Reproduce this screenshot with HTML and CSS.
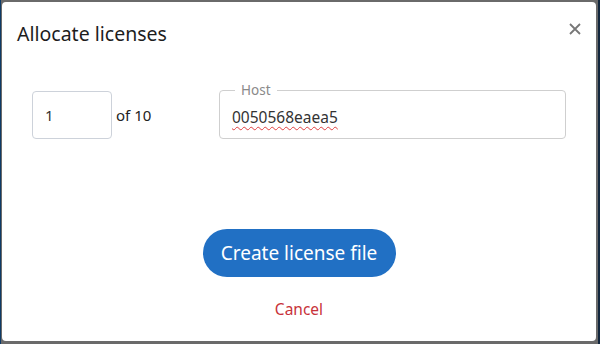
FILE: index.html
```html
<!DOCTYPE html>
<html lang="en">
<head>
    <meta charset="UTF-8">
    <meta name="viewport" content="width=device-width, initial-scale=1.0">
    <title>Allocate licenses</title>
    <link rel="stylesheet" href="styles.css">
</head>
<body>
    <div class="backdrop">
        <div class="dialog">
            <div class="dialog-header">
                <h2>Allocate licenses</h2>
                <button class="close-btn" aria-label="Close">
                    <svg width="12" height="12" viewBox="0 0 12 12">
                        <path d="M1 1 L11 11 M11 1 L1 11" stroke="#777" stroke-width="1.8" fill="none"/>
                    </svg>
                </button>
            </div>

            <div class="dialog-body">
                <div class="count-group">
                    <input type="text" class="count-input" value="1">
                    <span class="count-total">of 10</span>
                </div>
                <fieldset class="host-field">
                    <legend>Host</legend>
                    <span class="host-value">0050568eaea5</span>
                </fieldset>
            </div>

            <div class="dialog-actions">
                <button class="primary-btn">Create license file</button>
                <a href="#" class="cancel-link">Cancel</a>
            </div>
        </div>
    </div>
</body>
</html>
```

FILE: styles.css
```css
body {
    margin: 0;
    padding: 0;
    background-color: #6a6a6a;
    font-family: 'Noto Sans', 'Open Sans', sans-serif;
    color: #222;
}

.backdrop {
    padding: 2px 2px 3px 1px;
    height: 344px;
    box-sizing: border-box;
    border-left: 1px solid #0d3a66;
    border-right: 2px solid #12263d;
}

.dialog {
    background-color: white;
    border-radius: 4px;
    height: 339px;
    display: flex;
    flex-direction: column;
}

.dialog-header {
    display: flex;
    justify-content: space-between;
    align-items: center;
    padding: 18px 14px 0 15px;
}

.dialog-header h2 {
    margin: 0;
    font-size: 19.5px;
    font-weight: normal;
    color: #1d1d1d;
}

.close-btn {
    background: none;
    border: none;
    padding: 0;
    width: 14px;
    height: 14px;
    cursor: pointer;
    margin-top: -7px;
}

.dialog-body {
    display: flex;
    align-items: center;
    padding: 0 30px 0 30px;
    margin-top: 43px;
}

.count-group {
    display: flex;
    align-items: center;
    gap: 4px;
}

.count-input {
    width: 80px;
    height: 48px;
    box-sizing: border-box;
    border: 1px solid #cdd2da;
    border-radius: 4px;
    padding: 0 12px;
    font-family: inherit;
    font-size: 15px;
    color: #333;
}

.count-total {
    font-size: 15px;
    color: #222;
}

.host-field {
    margin: -9px 0 0 auto;
    width: 347px;
    height: 58px;
    box-sizing: border-box;
    border: 1px solid #cfcfcf;
    border-radius: 4px;
    padding: 7px 12px 0;
}

.host-field legend {
    font-size: 13.5px;
    color: #8a8a8a;
    padding: 0 6px;
    margin-left: 3px;
}

.host-value {
    font-size: 15.5px;
    color: #333;
    text-decoration: underline wavy #e04040;
    text-decoration-thickness: 1px;
    text-underline-offset: 3px;
}

.dialog-actions {
    display: flex;
    flex-direction: column;
    align-items: center;
    margin-top: 90px;
}

.primary-btn {
    width: 193px;
    height: 48px;
    background-color: #2170c4;
    color: white;
    border: none;
    border-radius: 24px;
    font-family: inherit;
    font-size: 19px;
    cursor: pointer;
}

.cancel-link {
    margin-top: 21px;
    color: #c8323a;
    font-size: 15.5px;
    text-decoration: none;
}
```
